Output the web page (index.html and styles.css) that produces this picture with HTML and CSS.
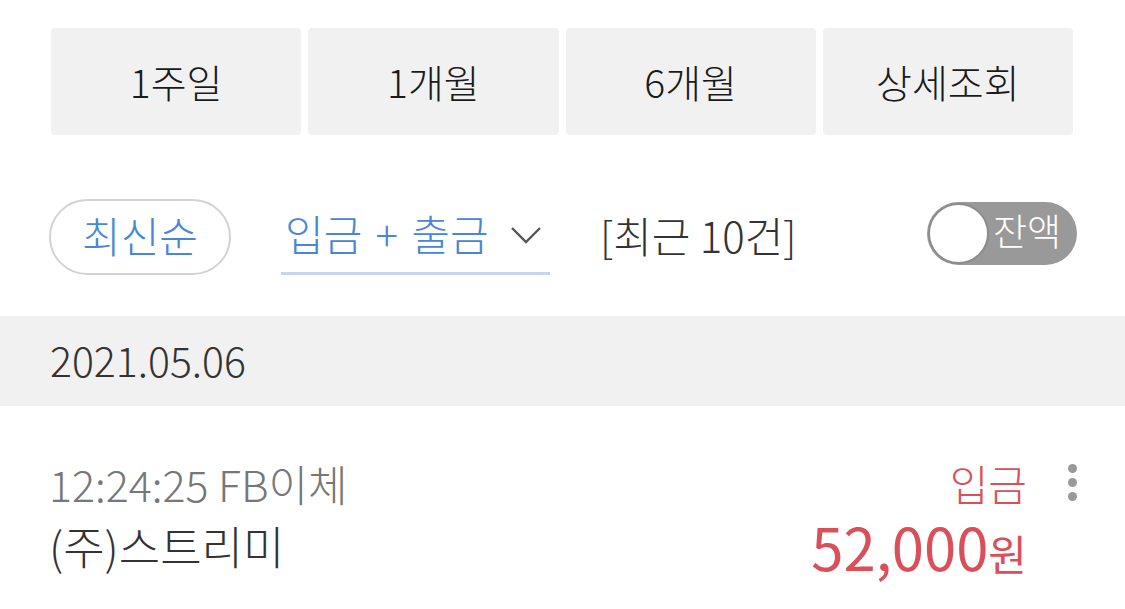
FILE: index.html
```html
<!DOCTYPE html>
<html>
<head>
<meta charset="utf-8">
<link rel="stylesheet" href="styles.css">
</head>
<body>

<div class="periods">
  <button class="period">1주일</button>
  <button class="period">1개월</button>
  <button class="period">6개월</button>
  <button class="period">상세조회</button>
</div>

<div class="filters">
  <button class="sort">최신순</button>
  <div class="kind">
    <span>입금 + 출금</span>
    <svg class="chevron" width="32" height="20" viewBox="0 0 32 20">
      <path d="M2 3 L16 17 L30 3" fill="none" stroke="#555" stroke-width="2.4"/>
    </svg>
  </div>
  <div class="count">[최근 10건]</div>
  <div class="toggle">
    <span class="knob"></span>
    <span class="toggle-label">잔액</span>
  </div>
</div>

<div class="date">2021.05.06</div>

<div class="item">
  <div class="item-left">
    <div class="item-meta">12:24:25 FB이체</div>
    <div class="item-name">(주)스트리미</div>
  </div>
  <div class="item-right">
    <div class="item-type">입금</div>
    <div class="item-amount">52,000<span class="won">원</span></div>
  </div>
  <div class="more">
    <span></span><span></span><span></span>
  </div>
</div>

</body>
</html>
```

FILE: styles.css
```css
body {
    margin: 0;
    font-family: "Noto Sans CJK KR", "Noto Sans", sans-serif;
    font-weight: 300;
    background: #fff;
    color: #222;
}

/* period buttons */
.periods {
    display: grid;
    grid-template-columns: repeat(4, 1fr);
    gap: 7px;
    padding: 28px 52px 0 51px;
}

.period {
    height: 107px;
    border: none;
    border-radius: 4px;
    background-color: #f1f1f1;
    font-family: inherit;
    font-weight: 300;
    font-size: 39px;
    color: #1a1a1a;
    padding: 0 0 2px;
}

/* filter row */
.filters {
    display: flex;
    align-items: center;
    height: 76px;
    padding: 64px 48px 41px 49px;
}

.sort {
    box-sizing: border-box;
    width: 182px;
    height: 76px;
    border: 2px solid #d3d3d3;
    border-radius: 38px;
    background: #fff;
    font-family: inherit;
    font-weight: 300;
    font-size: 42px;
    color: #4a86d6;
    padding: 0 0 6px;
}

.kind {
    box-sizing: border-box;
    display: flex;
    align-items: center;
    justify-content: space-between;
    width: 269px;
    height: 76px;
    margin-left: 50px;
    padding: 0 8px 6px 4px;
    border-bottom: 3px solid #c7d6ef;
    font-size: 42px;
    word-spacing: 4px;
    color: #4a86d6;
}

.chevron {
    margin-top: 4px;
}

.count {
    margin-left: 50px;
    font-size: 42px;
    color: #333;
    padding-bottom: 6px;
}

.toggle {
    box-sizing: border-box;
    display: flex;
    align-items: center;
    margin-left: auto;
    margin-bottom: 8px;
    width: 150px;
    height: 63px;
    border-radius: 32px;
    background-color: #999;
}

.knob {
    box-sizing: border-box;
    width: 61px;
    height: 61px;
    margin-left: 1px;
    border-radius: 50%;
    background: #fff;
    border: 2px solid #8c8c8c;
}

.toggle-label {
    margin-left: 4px;
    font-size: 37px;
    color: #fff;
    padding-bottom: 6px;
}

/* date header */
.date {
    height: 90px;
    line-height: 86px;
    padding-left: 50px;
    background-color: #f1f1f1;
    font-size: 41px;
    color: #333;
}

/* transaction row */
.item {
    display: flex;
    align-items: flex-start;
    padding: 46px 48px 0 49px;
}

.item-left {
    flex: 1;
}

.item-meta {
    font-size: 43px;
    line-height: 62px;
    color: #777;
}

.item-name {
    font-size: 45px;
    line-height: 64px;
    color: #333;
}

.item-right {
    text-align: right;
}

.item-type {
    font-size: 42px;
    line-height: 62px;
    color: #d9505a;
}

.item-amount {
    font-size: 58px;
    line-height: 64px;
    font-weight: 400;
    color: #d9505a;
}

.won {
    font-size: 42px;
}

.more {
    display: flex;
    flex-direction: column;
    gap: 5px;
    width: 9px;
    margin: 12px 0 0 41px;
}

.more span {
    width: 9px;
    height: 9px;
    border-radius: 50%;
    background-color: #999;
}
```
